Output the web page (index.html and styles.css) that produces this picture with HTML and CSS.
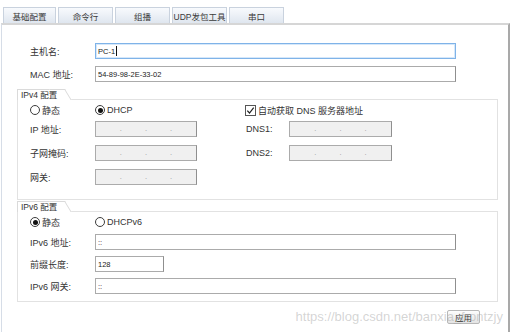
FILE: index.html
```html
<!DOCTYPE html>
<html>
<head>
  <title>PC-1</title>
  <meta charset="UTF-8">
  <link rel="stylesheet" href="styles.css">
</head>
<body>
  <div class="tabs">
    <div class="tab active">基础配置</div>
    <div class="tab">命令行</div>
    <div class="tab">组播</div>
    <div class="tab">UDP发包工具</div>
    <div class="tab">串口</div>
  </div>

  <div class="panel">
    <div class="row top">
      <label>主机名:</label>
      <div class="field wide focus">PC-1<span class="caret"></span></div>
    </div>
    <div class="row top">
      <label>MAC 地址:</label>
      <div class="field wide">54-89-98-2E-33-02</div>
    </div>

    <!-- IPv4 -->
    <div class="group v4">
      <div class="legend">IPv4 配置</div>
      <div class="group-body">
        <div class="row opts">
          <div class="opt first"><span class="radio"></span>静态</div>
          <div class="opt second"><span class="radio on"></span>DHCP</div>
          <div class="opt">
            <svg class="check" width="11" height="11" viewBox="0 0 11 11">
              <rect x="0.5" y="0.5" width="10" height="10" fill="#fff" stroke="#555"/>
              <path d="M2.3 5.6 L4.5 8 L8.7 2.6" fill="none" stroke="#222" stroke-width="1.2"/>
            </svg>
            自动获取 DNS 服务器地址
          </div>
        </div>
        <div class="row">
          <label>IP 地址:</label>
          <div class="field ip"><span>.</span><span>.</span><span>.</span></div>
          <label class="dns">DNS1:</label>
          <div class="field ip dns-ip"><span>.</span><span>.</span><span>.</span></div>
        </div>
        <div class="row">
          <label>子网掩码:</label>
          <div class="field ip"><span>.</span><span>.</span><span>.</span></div>
          <label class="dns">DNS2:</label>
          <div class="field ip dns-ip"><span>.</span><span>.</span><span>.</span></div>
        </div>
        <div class="row">
          <label>网关:</label>
          <div class="field ip"><span>.</span><span>.</span><span>.</span></div>
        </div>
      </div>
    </div>

    <!-- IPv6 -->
    <div class="group v6">
      <div class="legend">IPv6 配置</div>
      <div class="group-body">
        <div class="row opts">
          <div class="opt first"><span class="radio on"></span>静态</div>
          <div class="opt second"><span class="radio"></span>DHCPv6</div>
        </div>
        <div class="row">
          <label>IPv6 地址:</label>
          <div class="field wide">::</div>
        </div>
        <div class="row">
          <label>前缀长度:</label>
          <div class="field prefix">128</div>
        </div>
        <div class="row">
          <label>IPv6 网关:</label>
          <div class="field wide">::</div>
        </div>
      </div>
    </div>

    <div class="actions">
      <button class="apply">应用</button>
    </div>
  </div>

  <div class="watermark">https://blog.csdn.net/banxia_frontzjy</div>
</body>
</html>
```

FILE: styles.css
```css
html, body {
  margin: 0;
  background: #fff;
}
body {
  position: relative;
  font-family: "Liberation Sans", "Noto Sans CJK SC", sans-serif;
  font-size: 9px;
  color: #333;
  overflow: hidden;
  height: 332px;
}

/* tab strip */
.tabs {
  display: flex;
  gap: 2px;
  padding: 7px 0 0 3px;
}
.tab {
  width: 55px;
  height: 16px;
  box-sizing: border-box;
  border: 1px solid #c9d2de;
  border-bottom: none;
  background: linear-gradient(#f8fafd, #dfe6ef);
  display: flex;
  align-items: center;
  justify-content: center;
  white-space: nowrap;
  font-size: 8.5px;
  color: #3a3a3a;
}
.tab.active {
  width: 53px;
}

/* main panel */
.panel {
  margin-left: 1px;
  width: 509px;
  height: 320px;
  box-sizing: border-box;
  border-top: 2px solid #d6d6d6;
  border-left: 1px solid #d6dde7;
  border-right: 2px solid #a9a9a9;
  padding: 18px 10px 0 15px;
}

.row {
  display: flex;
  align-items: center;
  height: 16px;
  margin-bottom: 7px;
}
.row.top {
  padding-left: 13px;
}
.row label {
  width: 65px;
  flex: none;
}

.field {
  height: 16px;
  box-sizing: border-box;
  border: 1px solid #ababab;
  border-right-color: #8f8f8f;
  background: #fff;
  display: flex;
  align-items: center;
  padding-left: 2px;
  font-size: 7.5px;
  color: #222;
}
.field.wide {
  width: 361px;
}
.field.focus {
  border: 1px solid #7fb3e8;
  box-shadow: inset 0 0 0 1px #d6e8fa;
}
.caret {
  display: inline-block;
  width: 1px;
  height: 10px;
  background: #111;
  margin-left: 1px;
}
.field.ip {
  width: 102px;
  background: #f0f0f0;
  justify-content: center;
  gap: 23px;
  padding: 0 0 2px 0;
  color: #999;
}
.field.dns-ip {
  width: 103px;
}
.field.prefix {
  width: 69px;
}
label.dns {
  width: 43px;
  margin-left: 49px;
}

/* fieldset-like groups */
.group {
  margin-top: 2px;
}
.group.v6 {
  margin-top: 1px;
}
.legend {
  position: relative;
  z-index: 1;
  width: 41px;
  height: 11px;
  box-sizing: border-box;
  margin-bottom: -1px;
  padding-left: 3px;
  border-top: 1px solid #dadada;
  border-left: 1px solid #dadada;
  background: #fff;
  line-height: 10px;
  font-size: 8.5px;
  white-space: nowrap;
}
.legend::after {
  content: "";
  position: absolute;
  top: -1px;
  right: -7px;
  width: 16px;
  height: 11px;
  box-sizing: border-box;
  border-top: 1px solid #dadada;
  border-right: 1px solid #dadada;
  background: #fff;
  transform: skewX(31deg);
  transform-origin: top left;
  z-index: -1;
}
.group-body {
  border: 1px solid #e2e2e2;
  padding: 3px 0 14px 12px;
}
.group-body .row:last-child {
  margin-bottom: 0;
}
.v4 .row {
  margin-bottom: 8px;
}
.v4 .row.opts {
  height: 14px;
  margin-bottom: 4px;
}
.v6 .group-body {
  padding-bottom: 7px;
}
.v6 .row {
  margin-bottom: 6px;
}
.v6 .row.opts {
  height: 14px;
  margin-bottom: 5px;
}

.opt {
  display: flex;
  align-items: center;
  gap: 2px;
  flex: none;
}
.opt.first {
  width: 65px;
}
.opt.second {
  width: 150px;
}
.radio {
  width: 10px;
  height: 10px;
  box-sizing: border-box;
  border: 1px solid #3c3c3c;
  border-radius: 50%;
  background: #fff;
  display: flex;
  align-items: center;
  justify-content: center;
}
.radio.on::after {
  content: "";
  width: 5px;
  height: 5px;
  border-radius: 50%;
  background: #111;
}
.check {
  display: block;
}

.actions {
  display: flex;
  justify-content: flex-end;
  margin: 8px 18px 0 0;
}
.apply {
  width: 33px;
  height: 14px;
  padding: 0;
  border: 1px solid #b8b8b8;
  border-radius: 2px;
  background: linear-gradient(#fdfdfd, #e4e4e4);
  font-family: "Liberation Sans", "Noto Sans CJK SC", sans-serif;
  font-size: 8.5px;
  color: #333;
}

/* blog watermark over the bottom right */
.watermark {
  position: absolute;
  right: 8px;
  top: 309px;
  font-size: 13px;
  color: rgba(160, 160, 160, 0.45);
  pointer-events: none;
}
```
